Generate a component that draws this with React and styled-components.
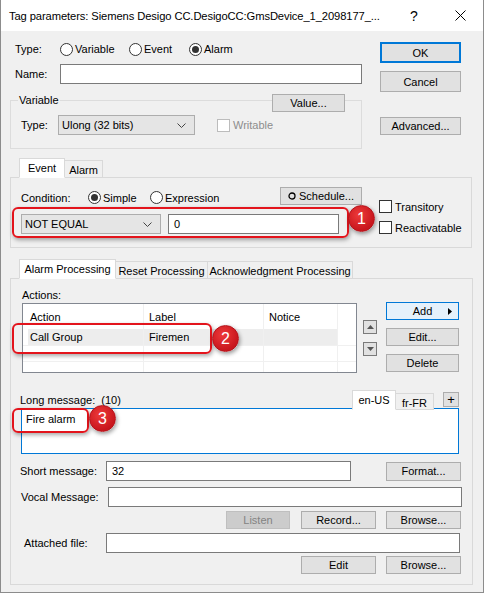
import React from 'react';
import styled, { createGlobalStyle, css } from 'styled-components';

const GlobalStyle = createGlobalStyle`
  html, body { margin: 0; padding: 0; background: #fff; }
  body {
    font-family: "Liberation Sans", Arial, sans-serif;
    font-size: 11px;
    color: #000;
  }
  * { box-sizing: border-box; }
`;

const Window = styled.div`
  width: 484px;
  height: 593px;
  border: 1px solid #8c8c8c;
  border-top: none;
  display: flex;
  flex-direction: column;
  background: #f0f0f0;
`;

const TitleBar = styled.div`
  height: 31px;
  background: #fff;
  display: flex;
  align-items: center;
`;

const TitleText = styled.div`
  flex: 1;
  min-width: 0;
  padding-left: 8px;
  font-size: 11.2px;
  letter-spacing: -0.1px;
  white-space: nowrap;
`;

const CaptionBtn = styled.div`
  width: 46px;
  height: 31px;
  flex-shrink: 0;
  display: flex;
  align-items: center;
  justify-content: center;
  font-size: 14px;
`;

const Body = styled.div`
  flex: 1;
  display: flex;
  flex-direction: column;
  padding: 0 10px 7px 9px;
`;

const TopSplit = styled.div`
  display: flex;
  gap: 18px;
`;

const LeftCol = styled.div`
  width: 352px;
`;

const RightCol = styled.div`
  width: 81px;
  display: flex;
  flex-direction: column;
`;

const Row = styled.div`
  display: flex;
  align-items: center;
  height: ${p => p.$h || 16}px;
  margin-top: ${p => p.$mt || 0}px;
  margin-left: ${p => p.$ml || 0}px;
  margin-right: ${p => p.$mr || 0}px;
  justify-content: ${p => p.$justify || 'flex-start'};
  gap: ${p => p.$gap || 0}px;
`;

const Label = styled.span`
  display: inline-flex;
  align-items: center;
  width: ${p => (p.$w ? `${p.$w}px` : 'auto')};
  flex-shrink: 0;
  white-space: nowrap;
  color: ${p => (p.$disabled ? '#8d8d8d' : '#000')};
`;

const RadioItem = styled.span`
  display: inline-flex;
  align-items: center;
  width: ${p => (p.$w ? `${p.$w}px` : 'auto')};
  flex-shrink: 0;
  gap: 2px;
`;

const RadioCircle = styled.span`
  width: 13px;
  height: 13px;
  border-radius: 50%;
  border: 1px solid #333;
  background: #fff;
  display: inline-flex;
  align-items: center;
  justify-content: center;
  &::after {
    content: '';
    width: 7px;
    height: 7px;
    border-radius: 50%;
    background: ${p => (p.$checked ? '#333' : 'transparent')};
  }
`;

const CheckBox = styled.span`
  width: 13px;
  height: 13px;
  border: 1px solid ${p => (p.$disabled ? '#bcbcbc' : '#333')};
  background: #fff;
  flex-shrink: 0;
  margin-right: 3px;
`;

const TextInput = styled.div`
  width: ${p => (p.$w ? `${p.$w}px` : 'auto')};
  flex: ${p => (p.$w ? '0 0 auto' : '1')};
  height: 20px;
  border: 1px solid #7a7a7a;
  background: #fff;
  display: flex;
  align-items: center;
  padding-left: 5px;
`;

const Combo = styled.div`
  width: ${p => p.$w}px;
  height: 20px;
  border: 1px solid #adadad;
  background: #e5e5e5;
  display: flex;
  align-items: center;
  justify-content: space-between;
  padding: 0 8px 0 3px;
  flex-shrink: 0;
`;

const Button = styled.div`
  width: ${p => p.$w || 81}px;
  height: ${p => p.$h || 18}px;
  margin-top: ${p => p.$mt || 0}px;
  border: 1px solid #adadad;
  background: #e1e1e1;
  display: flex;
  align-items: center;
  justify-content: center;
  flex-shrink: 0;
  white-space: nowrap;
  ${p => p.$primary && css`
    border: 2px solid #0078d7;
  `}
  ${p => p.$focus && css`
    border-color: #0078d7;
    background: #e5f1fb;
  `}
  ${p => p.$disabled && css`
    border-color: #bfbfbf;
    background: #cccccc;
    color: #838383;
  `}
`;

const GroupBox = styled.div`
  position: relative;
  margin-top: 16px;
  height: 49px;
  border: 1px solid #dcdcdc;
  padding: 14px 0 0 10px;
`;

const GroupLegend = styled.span`
  position: absolute;
  top: -8px;
  left: 7px;
  padding: 0 1px;
  background: #f0f0f0;
  line-height: 14px;
`;

const GroupCorner = styled.div`
  position: absolute;
  top: -7px;
  left: 261px;
`;

const TabStrip = styled.div`
  display: flex;
  align-items: flex-end;
  padding-left: ${p => p.$pl || 0}px;
  margin-top: ${p => p.$mt || 0}px;
  margin-left: ${p => p.$ml || 'auto'};
  position: relative;
  z-index: 1;
`;

const Tab = styled.div`
  width: ${p => p.$w}px;
  height: ${p => (p.$active ? 20 : 18)}px;
  margin-bottom: -1px;
  border: 1px solid #d9d9d9;
  border-bottom: ${p => (p.$active ? '1px solid #fff' : '1px solid #d9d9d9')};
  margin-left: ${p => (p.$first ? 0 : -1)}px;
  background: ${p => (p.$active ? '#fff' : '#f0f0f0')};
  display: flex;
  align-items: center;
  justify-content: center;
  padding-top: ${p => (p.$active ? 0 : 2)}px;
  white-space: nowrap;
  z-index: ${p => (p.$active ? 2 : 1)};
`;

const TabPanel = styled.div`
  position: relative;
  border: 1px solid #d9d9d9;
  height: ${p => (p.$h ? `${p.$h}px` : 'auto')};
  flex: ${p => (p.$h ? '0 0 auto' : '1')};
  margin-right: ${p => p.$mr || 0}px;
  padding: ${p => p.$pad};
`;

const EventBody = styled.div`
  display: flex;
`;

const EventLeft = styled.div`
  width: 341px;
`;

const EventRight = styled.div`
  margin-left: 17px;
  padding-top: 13px;
  display: flex;
  flex-direction: column;
  gap: 8px;
`;

const CheckRow = styled.div`
  display: flex;
  align-items: center;
  height: 13px;
`;

const Callout = styled.div`
  position: absolute;
  left: ${p => p.$x}px;
  top: ${p => p.$y}px;
  width: ${p => p.$w}px;
  height: ${p => p.$h}px;
  border: 2px solid #e3141c;
  border-radius: 6px;
  box-shadow: 1px 2px 4px rgba(0, 0, 0, 0.35);
  pointer-events: none;
  z-index: 5;
`;

const Badge = styled.div`
  position: absolute;
  left: ${p => p.$x}px;
  top: ${p => p.$y}px;
  width: 27px;
  height: 27px;
  border-radius: 50%;
  background: radial-gradient(circle at 40% 35%, #ee3a3a, #c8161d 70%);
  border: 1px solid #b3121a;
  box-shadow: 1px 2px 4px rgba(0, 0, 0, 0.4);
  color: #fff;
  font-size: 16px;
  display: flex;
  align-items: center;
  justify-content: center;
  z-index: 6;
`;

const ActionsRow = styled.div`
  display: flex;
  margin-top: 2px;
`;

const ListView = styled.div`
  width: 335px;
  height: 70px;
  border: 1px solid #828790;
  background: #fff;
  display: grid;
  grid-template-columns: 121px 120px 74px 1fr;
  grid-template-rows: 25px 17px 16px 1fr;
  overflow: hidden;
`;

const Cell = styled.div`
  border-right: ${p => (p.$last ? 'none' : '1px solid #f0f0f0')};
  border-bottom: ${p => (p.$line ? '1px solid #f0f0f0' : 'none')};
  padding-left: ${p => p.$pl ?? 5}px;
  display: flex;
  align-items: center;
  background: ${p => (p.$sel ? '#ededed' : 'transparent')};
`;

const ScrollCol = styled.div`
  margin-left: 6px;
  padding-top: 17px;
  display: flex;
  flex-direction: column;
  gap: 8px;
`;

const SpinBtn = styled.div`
  width: 14px;
  height: 14px;
  border: 1px solid #7a7a7a;
  background: #e1e1e1;
  display: flex;
  align-items: center;
  justify-content: center;
`;

const SideButtons = styled.div`
  margin-left: 9px;
  margin-top: -1px;
  display: flex;
  flex-direction: column;
  gap: 8px;
`;

const AddButton = styled(Button)`
  position: relative;
  & > svg {
    position: absolute;
    right: 6px;
    top: 5px;
  }
`;

const LongHeader = styled.div`
  display: flex;
  align-items: flex-end;
  height: 20px;
  margin-top: 16px;
`;

const PlusBtn = styled.div`
  width: 16px;
  height: 15px;
  margin: 0 0 2px 9px;
  border: 1px solid #adadad;
  background: #e1e1e1;
  display: flex;
  align-items: center;
  justify-content: center;
  font-size: 13px;
  line-height: 1;
`;

const MessageBox = styled.div`
  height: 46px;
  margin-left: -1px;
  margin-top: -1px;
  border: 1px solid #0078d7;
  background: #fff;
  padding: 3px 4px;
  line-height: 14px;
`;

const Chevron = () => (
  <svg width="9" height="5" viewBox="0 0 9 5">
    <path d="M0.5 0.5 L4.5 4.5 L8.5 0.5" fill="none" stroke="#444" strokeWidth="1" />
  </svg>
);

const Arrow = ({ dir }) => (
  <svg width="7" height="4" viewBox="0 0 7 4">
    <path d={dir === 'up' ? 'M0 4 L3.5 0 L7 4 Z' : 'M0 0 L3.5 4 L7 0 Z'} fill="#555" />
  </svg>
);

export default function App() {
  return (
    <>
      <GlobalStyle />
      <Window>
        <TitleBar>
          <TitleText>Tag parameters: Siemens Desigo CC.DesigoCC:GmsDevice_1_2098177_...</TitleText>
          <CaptionBtn>?</CaptionBtn>
          <CaptionBtn>
            <svg width="11" height="11" viewBox="0 0 11 11">
              <path d="M0.5 0.5 L10.5 10.5 M10.5 0.5 L0.5 10.5" stroke="#000" strokeWidth="1" />
            </svg>
          </CaptionBtn>
        </TitleBar>

        <Body>
          <TopSplit>
            <LeftCol>
              <Row $mt={10} $ml={5}>
                <Label $w={45}>Type:</Label>
                <RadioItem $w={69}><RadioCircle />Variable</RadioItem>
                <RadioItem $w={60}><RadioCircle />Event</RadioItem>
                <RadioItem><RadioCircle $checked />Alarm</RadioItem>
              </Row>
              <Row $h={20} $mt={7} $ml={5}>
                <Label $w={45}>Name:</Label>
                <TextInput $w={302} />
              </Row>
              <GroupBox>
                <GroupLegend>Variable</GroupLegend>
                <GroupCorner><Button $w={73} $h={18}>Value...</Button></GroupCorner>
                <Row $h={20}>
                  <Label $w={37}>Type:</Label>
                  <Combo $w={137}>Ulong (32 bits)<Chevron /></Combo>
                  <Label $disabled style={{ marginLeft: 22 }}>
                    <CheckBox $disabled />Writable
                  </Label>
                </Row>
              </GroupBox>
            </LeftCol>
            <RightCol>
              <Button $primary $h={21} $mt={11}>OK</Button>
              <Button $h={21} $mt={8}>Cancel</Button>
              <Button $h={18} $mt={25}>Advanced...</Button>
            </RightCol>
          </TopSplit>

          <TabStrip $pl={9} $mt={9} $ml="0">
            <Tab $w={46} $active $first>Event</Tab>
            <Tab $w={39}>Alarm</Tab>
          </TabStrip>
          <TabPanel $h={71} $mr={1} $pad="9px 0 0 10px">
            <EventBody>
              <EventLeft>
                <Row $h={18}>
                  <Label $w={67} style={{ marginTop: 3 }}>Condition:</Label>
                  <RadioItem $w={62} style={{ marginTop: 3 }}><RadioCircle $checked />Simple</RadioItem>
                  <RadioItem style={{ marginTop: 3 }}><RadioCircle />Expression</RadioItem>
                  <Button $w={82} $h={18} style={{ marginLeft: 'auto', gap: 3 }}>
                    <svg width="8" height="8" viewBox="0 0 8 8">
                      <circle cx="4" cy="4" r="3" fill="none" stroke="#000" strokeWidth="1.3" />
                    </svg>
                    Schedule...
                  </Button>
                </Row>
                <Row $h={20} $mt={9} $gap={7}>
                  <Combo $w={140}>NOT EQUAL<Chevron /></Combo>
                  <TextInput $w={171}>0</TextInput>
                </Row>
              </EventLeft>
              <EventRight>
                <CheckRow><CheckBox />Transitory</CheckRow>
                <CheckRow><CheckBox />Reactivatable</CheckRow>
              </EventRight>
            </EventBody>
            <Callout $x={1} $y={29} $w={337} $h={31} />
            <Badge $x={337} $y={27}>1</Badge>
          </TabPanel>

          <TabStrip $pl={9} $mt={11} $ml="0">
            <Tab $w={97} $active $first>Alarm Processing</Tab>
            <Tab $w={93}>Reset Processing</Tab>
            <Tab $w={146}>Acknowledgment Processing</Tab>
          </TabStrip>
          <TabPanel $pad="10px 13px 0 11px">
            <Label>Actions:</Label>
            <ActionsRow>
              <ListView>
                <Cell $pl={7}>Action</Cell>
                <Cell>Label</Cell>
                <Cell>Notice</Cell>
                <Cell $last />
                <Cell $line $sel $pl={7} style={{ boxShadow: 'inset 5px 0 0 #fff' }}>Call Group</Cell>
                <Cell $line $sel>Firemen</Cell>
                <Cell $line $sel />
                <Cell $line $last />
                <Cell $line />
                <Cell $line />
                <Cell $line />
                <Cell $line $last />
                <Cell />
                <Cell />
                <Cell />
                <Cell $last />
              </ListView>
              <ScrollCol>
                <SpinBtn><Arrow dir="up" /></SpinBtn>
                <SpinBtn><Arrow dir="down" /></SpinBtn>
              </ScrollCol>
              <SideButtons>
                <AddButton $w={73} $h={18} $focus>
                  Add
                  <svg width="4" height="7" viewBox="0 0 4 7">
                    <path d="M0 0 L4 3.5 L0 7 Z" fill="#000" />
                  </svg>
                </AddButton>
                <Button $w={73} $h={18}>Edit...</Button>
                <Button $w={73} $h={18}>Delete</Button>
              </SideButtons>
            </ActionsRow>

            <LongHeader>
              <Label style={{ marginLeft: -2, marginBottom: 3 }}>Long message:&nbsp;&nbsp;(10)</Label>
              <TabStrip>
                <Tab $w={44} $active $first>en-US</Tab>
                <Tab $w={39} style={{ height: 17 }}>fr-FR</Tab>
                <PlusBtn>+</PlusBtn>
              </TabStrip>
            </LongHeader>
            <MessageBox>Fire alarm</MessageBox>

            <Row $h={20} $mt={7} $ml={-2} $mr={-2}>
              <Label $w={86}>Short message:</Label>
              <TextInput $w={245}>32</TextInput>
              <Button $w={75} $h={19} style={{ marginLeft: 'auto' }}>Format...</Button>
            </Row>
            <Row $h={20} $mt={6} $ml={-1} $mr={-3}>
              <Label $w={87}>Vocal Message:</Label>
              <TextInput />
            </Row>
            <Row $h={18} $mt={4} $mr={-2} $justify="flex-end">
              <Button $w={64} $disabled>Listen</Button>
              <Button $w={75} style={{ marginLeft: 11 }}>Record...</Button>
              <Button $w={75} style={{ marginLeft: 10 }}>Browse...</Button>
            </Row>
            <Row $h={20} $mt={4} $ml={2} $mr={-1}>
              <Label $w={82}>Attached file:</Label>
              <TextInput />
            </Row>
            <Row $h={18} $mt={3} $mr={-2} $justify="flex-end">
              <Button $w={75}>Edit</Button>
              <Button $w={75} style={{ marginLeft: 10 }}>Browse...</Button>
            </Row>

            <Callout $x={1} $y={44} $w={200} $h={31} />
            <Badge $x={201} $y={46}>2</Badge>
            <Callout $x={1} $y={129} $w={77} $h={25} />
            <Badge $x={78} $y={126}>3</Badge>
          </TabPanel>
        </Body>
      </Window>
    </>
  );
}
